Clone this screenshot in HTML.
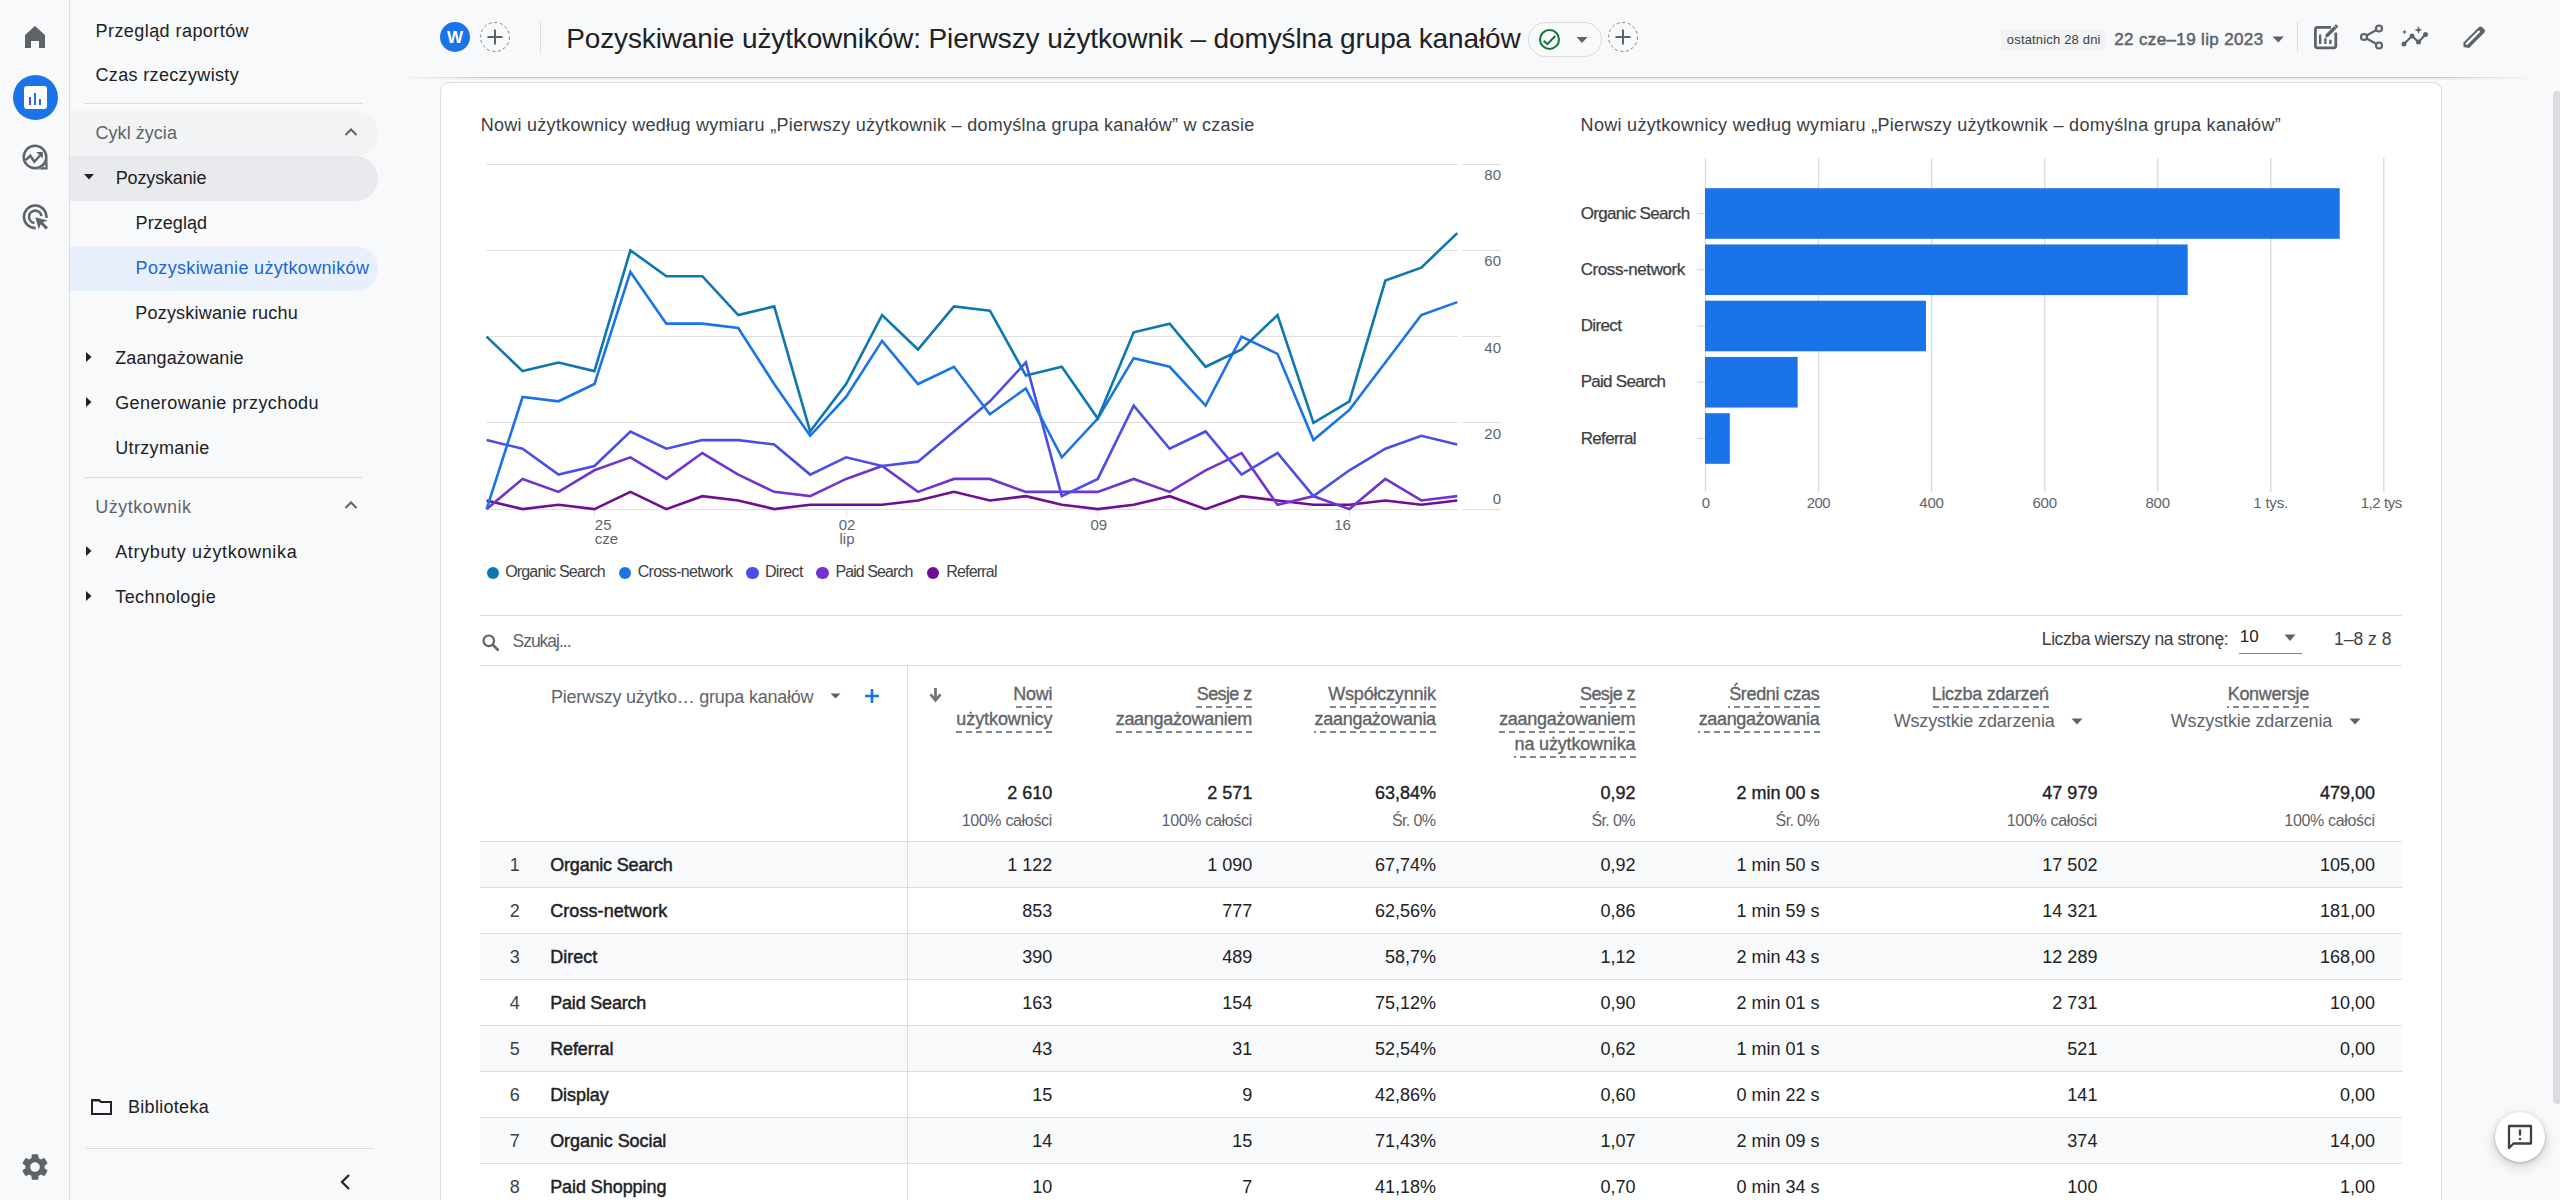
<!DOCTYPE html><html><head><meta charset="utf-8"><style>
*{box-sizing:border-box}
html,body{margin:0;padding:0;width:2560px;height:1200px;overflow:hidden;background:#f8f9fa;font-family:"Liberation Sans",sans-serif;}
.t{position:absolute;white-space:nowrap}
.a{position:absolute}
</style></head><body>
<div class="a" style="left:69px;top:0;width:1px;height:1200px;background:#dadce0"></div>
<svg class="a" style="left:23px;top:24px" width="24" height="26" viewBox="0 0 24 26"><path d="M2 11 L12 2 L22 11 V24 H16 V17 H8 V24 H2 Z" fill="#5f6368"/></svg>
<div class="a" style="left:13px;top:75px;width:45px;height:45px;border-radius:50%;background:#1a73e8"></div>
<div class="a" style="left:24px;top:86px;width:23px;height:23px;border-radius:3px;background:#fff"></div>
<div class="a" style="left:29px;top:97px;width:2px;height:8px;background:#4c4ce8"></div>
<div class="a" style="left:34px;top:93px;width:2px;height:12px;background:#1a73e8"></div>
<div class="a" style="left:39px;top:99px;width:2px;height:6px;background:#1a73e8"></div>
<svg class="a" style="left:22px;top:144px" width="27" height="27" viewBox="0 0 27 27"><path d="M13 25.6 H25.6 V13 A12.6 12.6 0 0 1 13 25.6 Z" fill="#5f6368"/><circle cx="22.6" cy="22.6" r="1" fill="#f8f9fa"/><circle cx="13" cy="13" r="11.3" fill="none" stroke="#5f6368" stroke-width="2.5"/><path d="M3.6 16.2 L8.3 11.6 L12.3 17.8 L18 11.5" fill="none" stroke="#5f6368" stroke-width="2.5"/><path d="M14.3 8.1 H20.8 V14.4 Z" fill="#5f6368"/></svg>
<svg class="a" style="left:22px;top:204px" width="28" height="28" viewBox="0 0 28 28"><path d="M24.5 13.8 A11.3 11.3 0 1 0 13.6 24.1" fill="none" stroke="#5f6368" stroke-width="2.6"/><path d="M19.4 12 A6.2 6.2 0 1 0 12.6 19" fill="none" stroke="#5f6368" stroke-width="2.6"/><path d="M13.3 13.3 L16.8 25.2 L18.8 20.2 L23.8 25.6 L26 23.4 L20.9 18.2 L25.8 16.4 Z" fill="#5f6368"/></svg>
<svg class="a" style="left:19px;top:1151px" width="32" height="32" viewBox="0 0 24 24"><path fill="#5f6368" d="M19.14 12.94c.04-.3.06-.61.06-.94 0-.32-.02-.64-.07-.94l2.03-1.58a.49.49 0 0 0 .12-.61l-1.92-3.32a.49.49 0 0 0-.59-.22l-2.39.96c-.5-.38-1.03-.7-1.62-.94l-.36-2.54a.48.48 0 0 0-.48-.41h-3.84c-.24 0-.43.17-.47.41l-.36 2.54c-.59.24-1.13.57-1.62.94l-2.39-.96c-.22-.08-.47 0-.59.22L2.74 8.87c-.12.21-.08.47.12.61l2.03 1.58c-.05.3-.09.63-.09.94s.02.64.07.94l-2.03 1.58a.49.49 0 0 0-.12.61l1.92 3.32c.12.22.37.29.59.22l2.39-.96c.5.38 1.03.7 1.62.94l.36 2.54c.05.24.24.41.48.41h3.84c.24 0 .44-.17.47-.41l.36-2.54c.59-.24 1.13-.56 1.62-.94l2.39.96c.22.08.47 0 .59-.22l1.92-3.32c.12-.22.07-.47-.12-.61l-2.01-1.58zM12 15.6c-1.98 0-3.6-1.62-3.6-3.6s1.62-3.6 3.6-3.6 3.6 1.62 3.6 3.6-1.62 3.6-3.6 3.6z"/></svg>
<div class="t" style="top:21.75px;font-size:18px;line-height:18px;color:#202124;letter-spacing:0.440px;left:95.50px;">Przegląd raportów</div>
<div class="t" style="top:66.25px;font-size:18px;line-height:18px;color:#202124;letter-spacing:0.343px;left:95.50px;">Czas rzeczywisty</div>
<div class="a" style="left:85px;top:102.5px;width:277px;height:1px;background:#dadce0"></div>
<div class="a" style="left:70px;top:111px;width:308px;height:45px;border-radius:0 23px 23px 0;background:#f1f3f4"></div>
<div class="t" style="top:123.75px;font-size:18px;line-height:18px;color:#5f6368;letter-spacing:0.046px;left:95.50px;">Cykl życia</div>
<svg class="a" style="left:344px;top:127px" width="14" height="10" viewBox="0 0 14 10"><path d="M1.5 8 L7 2.5 L12.5 8" fill="none" stroke="#5f6368" stroke-width="2"/></svg>
<div class="a" style="left:70px;top:156px;width:308px;height:45px;border-radius:0 23px 23px 0;background:#e8eaed"></div>
<svg class="a" style="left:84px;top:174px" width="10" height="6" viewBox="0 0 10 6"><path d="M0 0 H10 L5 5.5 Z" fill="#202124"/></svg>
<div class="t" style="top:168.75px;font-size:18px;line-height:18px;color:#202124;letter-spacing:-0.141px;left:115.70px;">Pozyskanie</div>
<div class="t" style="top:213.95px;font-size:18px;line-height:18px;color:#202124;letter-spacing:0.056px;left:135.60px;">Przegląd</div>
<div class="a" style="left:70px;top:246px;width:308px;height:45px;border-radius:0 23px 23px 0;background:#e8f0fe"></div>
<div class="t" style="top:258.75px;font-size:18px;line-height:18px;color:#1967d2;letter-spacing:0.342px;left:135.60px;">Pozyskiwanie użytkowników</div>
<div class="t" style="top:304.05px;font-size:18px;line-height:18px;color:#202124;letter-spacing:0.199px;left:135.30px;">Pozyskiwanie ruchu</div>
<svg class="a" style="left:86px;top:351.8px" width="6" height="10" viewBox="0 0 6 10"><path d="M0 0 L5.5 5 L0 10 Z" fill="#202124"/></svg>
<div class="t" style="top:349.05px;font-size:18px;line-height:18px;color:#202124;letter-spacing:0.102px;left:115.20px;">Zaangażowanie</div>
<svg class="a" style="left:86px;top:396.8px" width="6" height="10" viewBox="0 0 6 10"><path d="M0 0 L5.5 5 L0 10 Z" fill="#202124"/></svg>
<div class="t" style="top:394.05px;font-size:18px;line-height:18px;color:#202124;letter-spacing:0.409px;left:115.20px;">Generowanie przychodu</div>
<div class="t" style="top:439.05px;font-size:18px;line-height:18px;color:#202124;letter-spacing:0.346px;left:115.20px;">Utrzymanie</div>
<div class="a" style="left:85px;top:477px;width:277px;height:1px;background:#dadce0"></div>
<div class="t" style="top:498.05px;font-size:18px;line-height:18px;color:#5f6368;letter-spacing:0.513px;left:95.30px;">Użytkownik</div>
<svg class="a" style="left:344px;top:500px" width="14" height="10" viewBox="0 0 14 10"><path d="M1.5 8 L7 2.5 L12.5 8" fill="none" stroke="#5f6368" stroke-width="2"/></svg>
<svg class="a" style="left:86px;top:545.8px" width="6" height="10" viewBox="0 0 6 10"><path d="M0 0 L5.5 5 L0 10 Z" fill="#202124"/></svg>
<div class="t" style="top:543.05px;font-size:18px;line-height:18px;color:#202124;letter-spacing:0.652px;left:115.20px;">Atrybuty użytkownika</div>
<svg class="a" style="left:86px;top:590.8px" width="6" height="10" viewBox="0 0 6 10"><path d="M0 0 L5.5 5 L0 10 Z" fill="#202124"/></svg>
<div class="t" style="top:588.05px;font-size:18px;line-height:18px;color:#202124;letter-spacing:0.448px;left:115.20px;">Technologie</div>
<svg class="a" style="left:91px;top:1098px" width="21" height="17" viewBox="0 0 21 17"><path d="M1 2 H8 L10 4 H20 V16 H1 Z" fill="none" stroke="#202124" stroke-width="2"/><path d="M1 1.5 H8 L10 3.5 H1Z" fill="#202124"/></svg>
<div class="t" style="top:1097.85px;font-size:18px;line-height:18px;color:#202124;letter-spacing:0.298px;left:128.00px;">Biblioteka</div>
<div class="a" style="left:86px;top:1148px;width:288px;height:1px;background:#dadce0"></div>
<svg class="a" style="left:338px;top:1173px" width="14" height="18" viewBox="0 0 14 18"><path d="M11 2 L4 9 L11 16" fill="none" stroke="#202124" stroke-width="2.2"/></svg>
<div class="a" style="left:440px;top:22px;width:30px;height:30px;border-radius:50%;background:#1a73e8"></div>
<div class="t" style="top:29.10px;font-size:17px;line-height:17px;color:#fff;font-weight:700;left:446.97px;">W</div>
<svg class="a" style="left:479px;top:21px" width="32" height="32" viewBox="0 0 32 32"><circle cx="16" cy="16" r="14.5" fill="none" stroke="#80868b" stroke-width="1" stroke-dasharray="3 2.6"/><path d="M8.5 16 H23.5 M16 8.5 V23.5" stroke="#5f6368" stroke-width="2"/></svg>
<div class="a" style="left:540px;top:22px;width:1px;height:30px;background:#dadce0"></div>
<div class="t" style="top:25.03px;font-size:28px;line-height:28px;color:#202124;letter-spacing:-0.126px;left:566.20px;">Pozyskiwanie użytkowników: Pierwszy użytkownik – domyślna grupa kanałów</div>
<div class="a" style="left:1528px;top:22px;width:74px;height:35px;border-radius:18px;border:1px solid #dadce0"></div>
<svg class="a" style="left:1538px;top:28px" width="23" height="23" viewBox="0 0 23 23"><circle cx="11.5" cy="11.4" r="9.5" fill="none" stroke="#137333" stroke-width="2"/><path d="M5.7 12.7 L9.4 16.2 L17.2 8" fill="none" stroke="#137333" stroke-width="2"/></svg>
<svg class="a" style="left:1576px;top:36px" width="12" height="8" viewBox="0 0 12 8"><path d="M0.5 1 H11.5 L6 7 Z" fill="#5f6368"/></svg>
<svg class="a" style="left:1607px;top:21px" width="32" height="32" viewBox="0 0 32 32"><circle cx="16" cy="16" r="14.5" fill="none" stroke="#80868b" stroke-width="1" stroke-dasharray="3 2.6"/><path d="M8.5 16 H23.5 M16 8.5 V23.5" stroke="#5f6368" stroke-width="2"/></svg>
<div class="a" style="left:2001px;top:30px;width:105px;height:20px;background:#f1f3f4"></div>
<div class="t" style="top:32.89px;font-size:13px;line-height:13px;color:#3c4043;letter-spacing:0.176px;left:2006.80px;">ostatnich 28 dni</div>
<div class="t" style="top:31.00px;font-size:17px;line-height:17px;color:#5f6368;-webkit-text-stroke:0.5px #5f6368;letter-spacing:0.358px;left:2114.30px;">22 cze–19 lip 2023</div>
<svg class="a" style="left:2272px;top:36px" width="13" height="7" viewBox="0 0 13 7"><path d="M0.5 0.5 H12 L6.25 6.5 Z" fill="#5f6368"/></svg>
<div class="a" style="left:2297px;top:22px;width:1px;height:30px;background:#dadce0"></div>
<svg class="a" style="left:2312px;top:24px" width="28" height="27" viewBox="0 0 28 27"><path d="M19 3.4 H5.4 Q3.4 3.4 3.4 5.4 V21.8 Q3.4 23.8 5.4 23.8 H21.8 Q23.8 23.8 23.8 21.8 V8.5" fill="none" stroke="#5f6368" stroke-width="2.8"/><path d="M8.15 10.5 V19.9 M13.4 14.2 V19.9 M18.4 15.8 V19.9" stroke="#5f6368" stroke-width="2.3"/><path d="M13.2 13.4 L13.6 10.6 L22.2 2 L24.6 4.4 L16 13 Z" fill="#5f6368"/><path d="M23.2 1 L25.6 3.4" stroke="#5f6368" stroke-width="2.2"/></svg>
<svg class="a" style="left:2359px;top:24px" width="26" height="26" viewBox="0 0 26 26"><circle cx="20" cy="4.5" r="3" fill="none" stroke="#5f6368" stroke-width="2.2"/><circle cx="5" cy="13" r="3" fill="none" stroke="#5f6368" stroke-width="2.2"/><circle cx="20" cy="21.5" r="3" fill="none" stroke="#5f6368" stroke-width="2.2"/><path d="M7.6 11.5 L17.4 6 M7.6 14.5 L17.4 20" stroke="#5f6368" stroke-width="2.2"/></svg>
<svg class="a" style="left:2401px;top:25px" width="30" height="23" viewBox="0 0 30 23"><path d="M3 19 L11 11 L17.5 17 L24.5 9.5" fill="none" stroke="#5f6368" stroke-width="2.2"/><circle cx="3" cy="19" r="2.5" fill="#5f6368"/><circle cx="11" cy="11" r="2.5" fill="#5f6368"/><circle cx="17.5" cy="17" r="2.5" fill="#5f6368"/><circle cx="24.5" cy="9.5" r="2.5" fill="#5f6368"/><path d="M17.5 1 L18.6 3.9 L21.5 5 L18.6 6.1 L17.5 9 L16.4 6.1 L13.5 5 L16.4 3.9Z" fill="#5f6368"/><path d="M3.5 4.5 L4.2 6.3 L6 7 L4.2 7.7 L3.5 9.5 L2.8 7.7 L1 7 L2.8 6.3Z" fill="#5f6368"/></svg>
<svg class="a" style="left:2461px;top:25px" width="26" height="24" viewBox="0 0 26 24"><path d="M2.5 22 V17.5 L18 2 Q19.5 0.8 21 2 L23.5 4.5 Q24.7 6 23.5 7.5 L8 23 Z" fill="#5f6368"/><path d="M5 19.5 L18.5 6" stroke="#fff" stroke-width="2.3"/></svg>
<div class="a" style="left:400px;top:77px;width:2135px;height:1px;background:linear-gradient(90deg,rgba(60,64,67,0) 0,rgba(60,64,67,.28) 90px,rgba(60,64,67,.28) 2040px,rgba(60,64,67,0) 100%)"></div>
<div class="a" style="left:400px;top:78px;width:2135px;height:2px;background:linear-gradient(90deg,rgba(60,64,67,0) 0,rgba(60,64,67,.06) 90px,rgba(60,64,67,.06) 2040px,rgba(60,64,67,0) 100%)"></div>
<div class="a" style="left:440px;top:82px;width:2002px;height:1140px;border-radius:9px;border:1px solid #dadce0;background:#fff"></div>
<div class="t" style="top:115.55px;font-size:18px;line-height:18px;color:#3c4043;letter-spacing:0.258px;left:480.80px;">Nowi użytkownicy według wymiaru „Pierwszy użytkownik – domyślna grupa kanałów” w czasie</div>
<div class="t" style="top:116.25px;font-size:18px;line-height:18px;color:#3c4043;letter-spacing:0.297px;left:1580.60px;">Nowi użytkownicy według wymiaru „Pierwszy użytkownik – domyślna grupa kanałów”</div>
<svg class="a" style="left:0;top:0" width="2560" height="620" viewBox="0 0 2560 620"><path d="M486 509.50 H1458 M1463 509.50 H1501" stroke="#e0e0e0" stroke-width="1"/><path d="M486 422.50 H1458 M1463 422.50 H1501" stroke="#e0e0e0" stroke-width="1"/><path d="M486 336.50 H1458 M1463 336.50 H1501" stroke="#e0e0e0" stroke-width="1"/><path d="M486 250.50 H1458 M1463 250.50 H1501" stroke="#e0e0e0" stroke-width="1"/><path d="M486 164.50 H1458 M1463 164.50 H1501" stroke="#e0e0e0" stroke-width="1"/><path d="M594.5 509 V516" stroke="#e0e0e0" stroke-width="1"/><path d="M846.5 509 V516" stroke="#e0e0e0" stroke-width="1"/><path d="M1097.5 509 V516" stroke="#e0e0e0" stroke-width="1"/><path d="M1349.5 509 V516" stroke="#e0e0e0" stroke-width="1"/><polyline points="486.60,500.48 522.55,509.10 558.50,504.79 594.45,509.10 630.40,491.85 666.35,509.10 702.30,496.16 738.25,500.48 774.20,509.10 810.15,504.79 846.10,504.79 882.05,504.79 918.00,500.48 953.95,491.85 989.90,500.48 1025.85,496.16 1061.80,504.79 1097.75,509.10 1133.70,504.79 1169.65,496.16 1205.60,509.10 1241.55,496.16 1277.50,500.48 1313.45,504.79 1349.40,504.79 1385.35,500.48 1421.30,504.79 1457.25,500.48" fill="none" stroke="#6f0d93" stroke-width="2.6" stroke-linejoin="miter" stroke-miterlimit="10"/><polyline points="486.60,509.10 522.55,478.91 558.50,491.85 594.45,470.29 630.40,457.35 666.35,478.91 702.30,453.04 738.25,474.60 774.20,491.85 810.15,496.16 846.10,478.91 882.05,465.98 918.00,491.85 953.95,478.91 989.90,478.91 1025.85,491.85 1061.80,491.85 1097.75,491.85 1133.70,478.91 1169.65,491.85 1205.60,470.29 1241.55,453.04 1277.50,504.79 1313.45,496.16 1349.40,509.10 1385.35,478.91 1421.30,500.48 1457.25,496.16" fill="none" stroke="#7234d1" stroke-width="2.6" stroke-linejoin="miter" stroke-miterlimit="10"/><polyline points="486.60,440.10 522.55,448.73 558.50,474.60 594.45,465.98 630.40,431.48 666.35,448.73 702.30,440.10 738.25,440.10 774.20,444.41 810.15,474.60 846.10,457.35 882.05,465.98 918.00,461.66 953.95,431.48 989.90,401.29 1025.85,362.48 1061.80,496.16 1097.75,478.91 1133.70,405.60 1169.65,448.73 1205.60,431.48 1241.55,474.60 1277.50,453.04 1313.45,496.16 1349.40,470.29 1385.35,448.73 1421.30,435.79 1457.25,444.41" fill="none" stroke="#4b4de9" stroke-width="2.6" stroke-linejoin="miter" stroke-miterlimit="10"/><polyline points="486.60,509.10 522.55,396.98 558.50,401.29 594.45,384.04 630.40,271.91 666.35,323.66 702.30,323.66 738.25,327.98 774.20,384.04 810.15,435.79 846.10,396.98 882.05,340.91 918.00,384.04 953.95,366.79 989.90,414.23 1025.85,388.35 1061.80,457.35 1097.75,418.54 1133.70,358.16 1169.65,366.79 1205.60,405.60 1241.55,336.60 1277.50,353.85 1313.45,440.10 1349.40,409.91 1385.35,362.48 1421.30,315.04 1457.25,302.10" fill="none" stroke="#1a73e8" stroke-width="2.6" stroke-linejoin="miter" stroke-miterlimit="10"/><polyline points="486.60,336.60 522.55,371.10 558.50,362.48 594.45,371.10 630.40,250.35 666.35,276.23 702.30,276.23 738.25,315.04 774.20,306.41 810.15,431.48 846.10,384.04 882.05,315.04 918.00,349.54 953.95,306.41 989.90,310.73 1025.85,375.41 1061.80,366.79 1097.75,418.54 1133.70,332.29 1169.65,323.66 1205.60,366.79 1241.55,349.54 1277.50,315.04 1313.45,422.85 1349.40,401.29 1385.35,280.54 1421.30,267.60 1457.25,233.10" fill="none" stroke="#0c77b0" stroke-width="2.6" stroke-linejoin="miter" stroke-miterlimit="10"/><path d="M1705.50 158 V492" stroke="#dadce0" stroke-width="1.4"/><path d="M1818.55 158 V492" stroke="#dadce0" stroke-width="1.4"/><path d="M1931.60 158 V492" stroke="#dadce0" stroke-width="1.4"/><path d="M2044.65 158 V492" stroke="#dadce0" stroke-width="1.4"/><path d="M2157.70 158 V492" stroke="#dadce0" stroke-width="1.4"/><path d="M2270.75 158 V492" stroke="#dadce0" stroke-width="1.4"/><path d="M2383.80 158 V492" stroke="#dadce0" stroke-width="1.4"/><rect x="1705.00" y="188.20" width="634.71" height="50.6" fill="#1a73e8"/><path d="M1697 213.50 H1705" stroke="#dadce0" stroke-width="1.4"/><rect x="1705.00" y="244.45" width="482.66" height="50.6" fill="#1a73e8"/><path d="M1697 269.75 H1705" stroke="#dadce0" stroke-width="1.4"/><rect x="1705.00" y="300.70" width="220.95" height="50.6" fill="#1a73e8"/><path d="M1697 326.00 H1705" stroke="#dadce0" stroke-width="1.4"/><rect x="1705.00" y="356.95" width="92.64" height="50.6" fill="#1a73e8"/><path d="M1697 382.25 H1705" stroke="#dadce0" stroke-width="1.4"/><rect x="1705.00" y="413.20" width="24.81" height="50.6" fill="#1a73e8"/><path d="M1697 438.50 H1705" stroke="#dadce0" stroke-width="1.4"/></svg>
<div class="t" style="top:491.20px;font-size:15px;line-height:15px;color:#5f6368;right:1059.00px;text-align:right;">0</div>
<div class="t" style="top:425.75px;font-size:15px;line-height:15px;color:#5f6368;right:1059.00px;text-align:right;">20</div>
<div class="t" style="top:339.50px;font-size:15px;line-height:15px;color:#5f6368;right:1059.00px;text-align:right;">40</div>
<div class="t" style="top:253.25px;font-size:15px;line-height:15px;color:#5f6368;right:1059.00px;text-align:right;">60</div>
<div class="t" style="top:167.00px;font-size:15px;line-height:15px;color:#5f6368;right:1059.00px;text-align:right;">80</div>
<div class="t" style="top:516.69px;font-size:15px;line-height:15px;color:#5f6368;left:594.80px;">25</div>
<div class="t" style="top:531.29px;font-size:15px;line-height:15px;color:#5f6368;left:594.80px;">cze</div>
<div class="t" style="top:516.69px;font-size:15px;line-height:15px;color:#5f6368;left:838.67px;">02</div>
<div class="t" style="top:531.29px;font-size:15px;line-height:15px;color:#5f6368;left:839.50px;">lip</div>
<div class="t" style="top:516.69px;font-size:15px;line-height:15px;color:#5f6368;left:1090.47px;">09</div>
<div class="t" style="top:516.69px;font-size:15px;line-height:15px;color:#5f6368;right:1209.20px;text-align:right;">16</div>
<div class="a" style="left:486.60px;top:566.70px;width:12.4px;height:12.4px;border-radius:50%;background:#0c77b0"></div>
<div class="t" style="top:564.45px;font-size:16px;line-height:16px;color:#3c4043;letter-spacing:-0.831px;left:505.20px;">Organic Search</div>
<div class="a" style="left:618.70px;top:566.70px;width:12.4px;height:12.4px;border-radius:50%;background:#1a73e8"></div>
<div class="t" style="top:564.45px;font-size:16px;line-height:16px;color:#3c4043;letter-spacing:-0.658px;left:637.70px;">Cross-network</div>
<div class="a" style="left:746.20px;top:566.70px;width:12.4px;height:12.4px;border-radius:50%;background:#4b4de9"></div>
<div class="t" style="top:564.45px;font-size:16px;line-height:16px;color:#3c4043;letter-spacing:-0.692px;left:765.00px;">Direct</div>
<div class="a" style="left:816.20px;top:566.70px;width:12.4px;height:12.4px;border-radius:50%;background:#7234d1"></div>
<div class="t" style="top:564.45px;font-size:16px;line-height:16px;color:#3c4043;letter-spacing:-0.910px;left:835.40px;">Paid Search</div>
<div class="a" style="left:927.10px;top:566.70px;width:12.4px;height:12.4px;border-radius:50%;background:#6f0d93"></div>
<div class="t" style="top:564.45px;font-size:16px;line-height:16px;color:#3c4043;letter-spacing:-0.797px;left:946.20px;">Referral</div>
<div class="t" style="top:204.60px;font-size:17px;line-height:17px;color:#3c4043;-webkit-text-stroke:0.25px #3c4043;letter-spacing:-0.665px;left:1580.70px;">Organic Search</div>
<div class="t" style="top:260.85px;font-size:17px;line-height:17px;color:#3c4043;-webkit-text-stroke:0.25px #3c4043;letter-spacing:-0.413px;left:1580.70px;">Cross-network</div>
<div class="t" style="top:317.10px;font-size:17px;line-height:17px;color:#3c4043;-webkit-text-stroke:0.25px #3c4043;letter-spacing:-0.634px;left:1580.70px;">Direct</div>
<div class="t" style="top:373.35px;font-size:17px;line-height:17px;color:#3c4043;-webkit-text-stroke:0.25px #3c4043;letter-spacing:-0.725px;left:1580.70px;">Paid Search</div>
<div class="t" style="top:429.60px;font-size:17px;line-height:17px;color:#3c4043;-webkit-text-stroke:0.25px #3c4043;letter-spacing:-0.662px;left:1580.70px;">Referral</div>
<div class="t" style="top:495.40px;font-size:15px;line-height:15px;color:#5f6368;left:1701.80px;">0</div>
<div class="t" style="top:495.40px;font-size:15px;line-height:15px;color:#5f6368;letter-spacing:-0.575px;left:1806.70px;">200</div>
<div class="t" style="top:495.40px;font-size:15px;line-height:15px;color:#5f6368;letter-spacing:-0.125px;left:1919.20px;">400</div>
<div class="t" style="top:495.40px;font-size:15px;line-height:15px;color:#5f6368;letter-spacing:-0.275px;left:2032.50px;">600</div>
<div class="t" style="top:495.40px;font-size:15px;line-height:15px;color:#5f6368;letter-spacing:-0.325px;left:2145.60px;">800</div>
<div class="t" style="top:495.40px;font-size:15px;line-height:15px;color:#5f6368;letter-spacing:-0.210px;left:2253.30px;">1 tys.</div>
<div class="t" style="top:495.40px;font-size:15px;line-height:15px;color:#5f6368;letter-spacing:-0.429px;left:2360.70px;">1,2 tys</div>
<div class="a" style="left:480px;top:615px;width:1922px;height:1px;background:#dadce0"></div>
<div class="a" style="left:480px;top:665px;width:1922px;height:1px;background:#dadce0"></div>
<svg class="a" style="left:481px;top:633px" width="20" height="20" viewBox="0 0 20 20"><circle cx="7.8" cy="7.8" r="5.3" fill="none" stroke="#5f6368" stroke-width="2.2"/><path d="M11.6 11.6 L17.5 17.5" stroke="#5f6368" stroke-width="2.6"/></svg>
<div class="t" style="top:632.68px;font-size:17.5px;line-height:17.5px;color:#5f6368;letter-spacing:-1.014px;left:512.50px;">Szukaj...</div>
<div class="t" style="top:631.18px;font-size:17.5px;line-height:17.5px;color:#3c4043;letter-spacing:-0.402px;left:2041.80px;">Liczba wierszy na stronę:</div>
<div class="t" style="top:627.70px;font-size:17px;line-height:17px;color:#202124;left:2239.80px;">10</div>
<div class="a" style="left:2239px;top:653px;width:63px;height:1px;background:#80868b"></div>
<svg class="a" style="left:2284px;top:634px" width="12" height="8" viewBox="0 0 12 8"><path d="M0.5 0.5 H11.5 L6 7 Z" fill="#5f6368"/></svg>
<div class="t" style="top:631.18px;font-size:17.5px;line-height:17.5px;color:#3c4043;right:168.60px;text-align:right;">1–8 z 8</div>
<div class="a" style="left:480px;top:841px;width:1922px;height:47px;background:#f8f9fa;border-top:1px solid #dadce0"></div>
<div class="a" style="left:480px;top:887px;width:1922px;height:47px;background:#fff;border-top:1px solid #dadce0"></div>
<div class="a" style="left:480px;top:933px;width:1922px;height:47px;background:#f8f9fa;border-top:1px solid #dadce0"></div>
<div class="a" style="left:480px;top:979px;width:1922px;height:47px;background:#fff;border-top:1px solid #dadce0"></div>
<div class="a" style="left:480px;top:1025px;width:1922px;height:47px;background:#f8f9fa;border-top:1px solid #dadce0"></div>
<div class="a" style="left:480px;top:1071px;width:1922px;height:47px;background:#fff;border-top:1px solid #dadce0"></div>
<div class="a" style="left:480px;top:1117px;width:1922px;height:47px;background:#f8f9fa;border-top:1px solid #dadce0"></div>
<div class="a" style="left:480px;top:1163px;width:1922px;height:47px;background:#fff;border-top:1px solid #dadce0"></div>
<div class="a" style="left:907px;top:666px;width:1px;height:540px;background:#dadce0"></div>
<div class="t" style="top:687.75px;font-size:18px;line-height:18px;color:#5f6368;letter-spacing:-0.224px;left:551.00px;">Pierwszy użytko… grupa kanałów</div>
<svg class="a" style="left:830px;top:693px" width="11" height="6" viewBox="0 0 11 6"><path d="M0.5 0.5 H10.5 L5.5 5.5 Z" fill="#5f6368"/></svg>
<svg class="a" style="left:864px;top:688px" width="16" height="16" viewBox="0 0 16 16"><path d="M1 8 H15 M8 1 V15" stroke="#1a73e8" stroke-width="2.6"/></svg>
<svg class="a" style="left:929px;top:687px" width="13" height="17" viewBox="0 0 13 17"><path d="M6.5 1 V12" stroke="#70757a" stroke-width="2.8"/><path d="M0.5 8.2 L6.5 15.5 L12.5 8.2 L10.6 6.4 L6.5 11 L2.4 6.4 Z" fill="#70757a"/></svg>
<div class="t" style="top:684.95px;font-size:18px;line-height:18px;color:#5f6368;-webkit-text-stroke:0.35px #5f6368;letter-spacing:-0.283px;right:1507.78px;text-align:right;">Nowi</div>
<div class="a" style="left:1012.3px;top:706.4px;width:40.2px;height:2px;background:repeating-linear-gradient(to left,#80868b 0 6px,transparent 6px 10px)"></div>
<div class="t" style="top:709.75px;font-size:18px;line-height:18px;color:#5f6368;-webkit-text-stroke:0.35px #5f6368;letter-spacing:-0.082px;right:1507.58px;text-align:right;">użytkownicy</div>
<div class="a" style="left:955.3px;top:731.3px;width:97.2px;height:2px;background:repeating-linear-gradient(to left,#80868b 0 6px,transparent 6px 10px)"></div>
<div class="t" style="top:684.95px;font-size:18px;line-height:18px;color:#5f6368;-webkit-text-stroke:0.35px #5f6368;letter-spacing:-0.590px;right:1308.39px;text-align:right;">Sesje z</div>
<div class="a" style="left:1195.7px;top:706.4px;width:56.5px;height:2px;background:repeating-linear-gradient(to left,#80868b 0 6px,transparent 6px 10px)"></div>
<div class="t" style="top:709.75px;font-size:18px;line-height:18px;color:#5f6368;-webkit-text-stroke:0.35px #5f6368;letter-spacing:-0.272px;right:1308.07px;text-align:right;">zaangażowaniem</div>
<div class="a" style="left:1114.6px;top:731.3px;width:137.6px;height:2px;background:repeating-linear-gradient(to left,#80868b 0 6px,transparent 6px 10px)"></div>
<div class="t" style="top:684.95px;font-size:18px;line-height:18px;color:#5f6368;-webkit-text-stroke:0.35px #5f6368;letter-spacing:-0.196px;right:1124.10px;text-align:right;">Współczynnik</div>
<div class="a" style="left:1327.1px;top:706.4px;width:109.0px;height:2px;background:repeating-linear-gradient(to left,#80868b 0 6px,transparent 6px 10px)"></div>
<div class="t" style="top:709.75px;font-size:18px;line-height:18px;color:#5f6368;-webkit-text-stroke:0.35px #5f6368;letter-spacing:-0.299px;right:1124.20px;text-align:right;">zaangażowania</div>
<div class="a" style="left:1313.5px;top:731.3px;width:122.6px;height:2px;background:repeating-linear-gradient(to left,#80868b 0 6px,transparent 6px 10px)"></div>
<div class="t" style="top:684.95px;font-size:18px;line-height:18px;color:#5f6368;-webkit-text-stroke:0.35px #5f6368;letter-spacing:-0.590px;right:925.09px;text-align:right;">Sesje z</div>
<div class="a" style="left:1579.0px;top:706.4px;width:56.5px;height:2px;background:repeating-linear-gradient(to left,#80868b 0 6px,transparent 6px 10px)"></div>
<div class="t" style="top:709.75px;font-size:18px;line-height:18px;color:#5f6368;-webkit-text-stroke:0.35px #5f6368;letter-spacing:-0.287px;right:924.79px;text-align:right;">zaangażowaniem</div>
<div class="a" style="left:1498.1px;top:731.3px;width:137.4px;height:2px;background:repeating-linear-gradient(to left,#80868b 0 6px,transparent 6px 10px)"></div>
<div class="t" style="top:734.95px;font-size:18px;line-height:18px;color:#5f6368;-webkit-text-stroke:0.35px #5f6368;letter-spacing:-0.163px;right:924.66px;text-align:right;">na użytkownika</div>
<div class="a" style="left:1513.5px;top:756.4px;width:122.0px;height:2px;background:repeating-linear-gradient(to left,#80868b 0 6px,transparent 6px 10px)"></div>
<div class="t" style="top:684.95px;font-size:18px;line-height:18px;color:#5f6368;-webkit-text-stroke:0.35px #5f6368;letter-spacing:-0.355px;right:740.65px;text-align:right;">Średni czas</div>
<div class="a" style="left:1728.2px;top:706.4px;width:91.5px;height:2px;background:repeating-linear-gradient(to left,#80868b 0 6px,transparent 6px 10px)"></div>
<div class="t" style="top:709.75px;font-size:18px;line-height:18px;color:#5f6368;-webkit-text-stroke:0.35px #5f6368;letter-spacing:-0.341px;right:740.64px;text-align:right;">zaangażowania</div>
<div class="a" style="left:1697.6px;top:731.3px;width:122.1px;height:2px;background:repeating-linear-gradient(to left,#80868b 0 6px,transparent 6px 10px)"></div>
<div class="t" style="top:684.95px;font-size:18px;line-height:18px;color:#5f6368;-webkit-text-stroke:0.35px #5f6368;letter-spacing:-0.288px;right:511.29px;text-align:right;">Liczba zdarzeń</div>
<div class="a" style="left:1930.7px;top:706.4px;width:118.3px;height:2px;background:repeating-linear-gradient(to left,#80868b 0 6px,transparent 6px 10px)"></div>
<div class="t" style="top:684.95px;font-size:18px;line-height:18px;color:#5f6368;-webkit-text-stroke:0.35px #5f6368;letter-spacing:-0.307px;right:251.01px;text-align:right;">Konwersje</div>
<div class="a" style="left:2226.7px;top:706.4px;width:82.6px;height:2px;background:repeating-linear-gradient(to left,#80868b 0 6px,transparent 6px 10px)"></div>
<div class="t" style="top:712.45px;font-size:18px;line-height:18px;color:#5f6368;letter-spacing:-0.164px;left:1893.70px;">Wszystkie zdarzenia</div>
<svg class="a" style="left:2071px;top:718px" width="12" height="7" viewBox="0 0 12 7"><path d="M0.5 0.5 H11.5 L6 6.5 Z" fill="#5f6368"/></svg>
<div class="t" style="top:712.45px;font-size:18px;line-height:18px;color:#5f6368;letter-spacing:-0.131px;left:2170.70px;">Wszystkie zdarzenia</div>
<svg class="a" style="left:2349px;top:718px" width="12" height="7" viewBox="0 0 12 7"><path d="M0.5 0.5 H11.5 L6 6.5 Z" fill="#5f6368"/></svg>
<div class="t" style="top:783.75px;font-size:18px;line-height:18px;color:#202124;-webkit-text-stroke:0.35px #202124;right:1507.70px;text-align:right;">2 610</div>
<div class="t" style="top:812.65px;font-size:16px;line-height:16px;color:#5f6368;letter-spacing:-0.331px;right:1508.03px;text-align:right;">100% całości</div>
<div class="t" style="top:783.75px;font-size:18px;line-height:18px;color:#202124;-webkit-text-stroke:0.35px #202124;right:1307.80px;text-align:right;">2 571</div>
<div class="t" style="top:812.65px;font-size:16px;line-height:16px;color:#5f6368;letter-spacing:-0.331px;right:1308.13px;text-align:right;">100% całości</div>
<div class="t" style="top:783.75px;font-size:18px;line-height:18px;color:#202124;-webkit-text-stroke:0.35px #202124;right:1124.00px;text-align:right;">63,84%</div>
<div class="t" style="top:812.65px;font-size:16px;line-height:16px;color:#5f6368;letter-spacing:-0.624px;right:1124.62px;text-align:right;">Śr. 0%</div>
<div class="t" style="top:783.75px;font-size:18px;line-height:18px;color:#202124;-webkit-text-stroke:0.35px #202124;right:924.50px;text-align:right;">0,92</div>
<div class="t" style="top:812.65px;font-size:16px;line-height:16px;color:#5f6368;letter-spacing:-0.624px;right:925.12px;text-align:right;">Śr. 0%</div>
<div class="t" style="top:783.75px;font-size:18px;line-height:18px;color:#202124;-webkit-text-stroke:0.35px #202124;right:740.40px;text-align:right;">2 min 00 s</div>
<div class="t" style="top:812.65px;font-size:16px;line-height:16px;color:#5f6368;letter-spacing:-0.624px;right:741.02px;text-align:right;">Śr. 0%</div>
<div class="t" style="top:783.75px;font-size:18px;line-height:18px;color:#202124;-webkit-text-stroke:0.35px #202124;right:462.60px;text-align:right;">47 979</div>
<div class="t" style="top:812.65px;font-size:16px;line-height:16px;color:#5f6368;letter-spacing:-0.331px;right:462.93px;text-align:right;">100% całości</div>
<div class="t" style="top:783.75px;font-size:18px;line-height:18px;color:#202124;-webkit-text-stroke:0.35px #202124;right:185.00px;text-align:right;">479,00</div>
<div class="t" style="top:812.65px;font-size:16px;line-height:16px;color:#5f6368;letter-spacing:-0.331px;right:185.33px;text-align:right;">100% całości</div>
<div class="t" style="top:855.75px;font-size:18px;line-height:18px;color:#3c4043;left:509.71px;">1</div>
<div class="t" style="top:855.75px;font-size:18px;line-height:18px;color:#202124;-webkit-text-stroke:0.45px #202124;letter-spacing:-0.185px;left:550.20px;">Organic Search</div>
<div class="t" style="top:855.75px;font-size:18px;line-height:18px;color:#202124;right:1507.70px;text-align:right;">1 122</div>
<div class="t" style="top:855.75px;font-size:18px;line-height:18px;color:#202124;right:1307.80px;text-align:right;">1 090</div>
<div class="t" style="top:855.75px;font-size:18px;line-height:18px;color:#202124;right:1124.00px;text-align:right;">67,74%</div>
<div class="t" style="top:855.75px;font-size:18px;line-height:18px;color:#202124;right:924.50px;text-align:right;">0,92</div>
<div class="t" style="top:855.75px;font-size:18px;line-height:18px;color:#202124;right:740.40px;text-align:right;">1 min 50 s</div>
<div class="t" style="top:855.75px;font-size:18px;line-height:18px;color:#202124;right:462.60px;text-align:right;">17 502</div>
<div class="t" style="top:855.75px;font-size:18px;line-height:18px;color:#202124;right:185.00px;text-align:right;">105,00</div>
<div class="t" style="top:901.75px;font-size:18px;line-height:18px;color:#3c4043;left:509.71px;">2</div>
<div class="t" style="top:901.75px;font-size:18px;line-height:18px;color:#202124;-webkit-text-stroke:0.45px #202124;letter-spacing:0.083px;left:550.20px;">Cross-network</div>
<div class="t" style="top:901.75px;font-size:18px;line-height:18px;color:#202124;right:1507.70px;text-align:right;">853</div>
<div class="t" style="top:901.75px;font-size:18px;line-height:18px;color:#202124;right:1307.80px;text-align:right;">777</div>
<div class="t" style="top:901.75px;font-size:18px;line-height:18px;color:#202124;right:1124.00px;text-align:right;">62,56%</div>
<div class="t" style="top:901.75px;font-size:18px;line-height:18px;color:#202124;right:924.50px;text-align:right;">0,86</div>
<div class="t" style="top:901.75px;font-size:18px;line-height:18px;color:#202124;right:740.40px;text-align:right;">1 min 59 s</div>
<div class="t" style="top:901.75px;font-size:18px;line-height:18px;color:#202124;right:462.60px;text-align:right;">14 321</div>
<div class="t" style="top:901.75px;font-size:18px;line-height:18px;color:#202124;right:185.00px;text-align:right;">181,00</div>
<div class="t" style="top:947.75px;font-size:18px;line-height:18px;color:#3c4043;left:509.71px;">3</div>
<div class="t" style="top:947.75px;font-size:18px;line-height:18px;color:#202124;-webkit-text-stroke:0.45px #202124;letter-spacing:0.024px;left:550.20px;">Direct</div>
<div class="t" style="top:947.75px;font-size:18px;line-height:18px;color:#202124;right:1507.70px;text-align:right;">390</div>
<div class="t" style="top:947.75px;font-size:18px;line-height:18px;color:#202124;right:1307.80px;text-align:right;">489</div>
<div class="t" style="top:947.75px;font-size:18px;line-height:18px;color:#202124;right:1124.00px;text-align:right;">58,7%</div>
<div class="t" style="top:947.75px;font-size:18px;line-height:18px;color:#202124;right:924.50px;text-align:right;">1,12</div>
<div class="t" style="top:947.75px;font-size:18px;line-height:18px;color:#202124;right:740.40px;text-align:right;">2 min 43 s</div>
<div class="t" style="top:947.75px;font-size:18px;line-height:18px;color:#202124;right:462.60px;text-align:right;">12 289</div>
<div class="t" style="top:947.75px;font-size:18px;line-height:18px;color:#202124;right:185.00px;text-align:right;">168,00</div>
<div class="t" style="top:993.75px;font-size:18px;line-height:18px;color:#3c4043;left:509.71px;">4</div>
<div class="t" style="top:993.75px;font-size:18px;line-height:18px;color:#202124;-webkit-text-stroke:0.45px #202124;letter-spacing:-0.190px;left:550.20px;">Paid Search</div>
<div class="t" style="top:993.75px;font-size:18px;line-height:18px;color:#202124;right:1507.70px;text-align:right;">163</div>
<div class="t" style="top:993.75px;font-size:18px;line-height:18px;color:#202124;right:1307.80px;text-align:right;">154</div>
<div class="t" style="top:993.75px;font-size:18px;line-height:18px;color:#202124;right:1124.00px;text-align:right;">75,12%</div>
<div class="t" style="top:993.75px;font-size:18px;line-height:18px;color:#202124;right:924.50px;text-align:right;">0,90</div>
<div class="t" style="top:993.75px;font-size:18px;line-height:18px;color:#202124;right:740.40px;text-align:right;">2 min 01 s</div>
<div class="t" style="top:993.75px;font-size:18px;line-height:18px;color:#202124;right:462.60px;text-align:right;">2 731</div>
<div class="t" style="top:993.75px;font-size:18px;line-height:18px;color:#202124;right:185.00px;text-align:right;">10,00</div>
<div class="t" style="top:1039.75px;font-size:18px;line-height:18px;color:#3c4043;left:509.71px;">5</div>
<div class="t" style="top:1039.75px;font-size:18px;line-height:18px;color:#202124;-webkit-text-stroke:0.45px #202124;letter-spacing:-0.113px;left:550.20px;">Referral</div>
<div class="t" style="top:1039.75px;font-size:18px;line-height:18px;color:#202124;right:1507.70px;text-align:right;">43</div>
<div class="t" style="top:1039.75px;font-size:18px;line-height:18px;color:#202124;right:1307.80px;text-align:right;">31</div>
<div class="t" style="top:1039.75px;font-size:18px;line-height:18px;color:#202124;right:1124.00px;text-align:right;">52,54%</div>
<div class="t" style="top:1039.75px;font-size:18px;line-height:18px;color:#202124;right:924.50px;text-align:right;">0,62</div>
<div class="t" style="top:1039.75px;font-size:18px;line-height:18px;color:#202124;right:740.40px;text-align:right;">1 min 01 s</div>
<div class="t" style="top:1039.75px;font-size:18px;line-height:18px;color:#202124;right:462.60px;text-align:right;">521</div>
<div class="t" style="top:1039.75px;font-size:18px;line-height:18px;color:#202124;right:185.00px;text-align:right;">0,00</div>
<div class="t" style="top:1085.75px;font-size:18px;line-height:18px;color:#3c4043;left:509.71px;">6</div>
<div class="t" style="top:1085.75px;font-size:18px;line-height:18px;color:#202124;-webkit-text-stroke:0.45px #202124;letter-spacing:-0.073px;left:550.20px;">Display</div>
<div class="t" style="top:1085.75px;font-size:18px;line-height:18px;color:#202124;right:1507.70px;text-align:right;">15</div>
<div class="t" style="top:1085.75px;font-size:18px;line-height:18px;color:#202124;right:1307.80px;text-align:right;">9</div>
<div class="t" style="top:1085.75px;font-size:18px;line-height:18px;color:#202124;right:1124.00px;text-align:right;">42,86%</div>
<div class="t" style="top:1085.75px;font-size:18px;line-height:18px;color:#202124;right:924.50px;text-align:right;">0,60</div>
<div class="t" style="top:1085.75px;font-size:18px;line-height:18px;color:#202124;right:740.40px;text-align:right;">0 min 22 s</div>
<div class="t" style="top:1085.75px;font-size:18px;line-height:18px;color:#202124;right:462.60px;text-align:right;">141</div>
<div class="t" style="top:1085.75px;font-size:18px;line-height:18px;color:#202124;right:185.00px;text-align:right;">0,00</div>
<div class="t" style="top:1131.75px;font-size:18px;line-height:18px;color:#3c4043;left:509.71px;">7</div>
<div class="t" style="top:1131.75px;font-size:18px;line-height:18px;color:#202124;-webkit-text-stroke:0.45px #202124;letter-spacing:-0.068px;left:550.20px;">Organic Social</div>
<div class="t" style="top:1131.75px;font-size:18px;line-height:18px;color:#202124;right:1507.70px;text-align:right;">14</div>
<div class="t" style="top:1131.75px;font-size:18px;line-height:18px;color:#202124;right:1307.80px;text-align:right;">15</div>
<div class="t" style="top:1131.75px;font-size:18px;line-height:18px;color:#202124;right:1124.00px;text-align:right;">71,43%</div>
<div class="t" style="top:1131.75px;font-size:18px;line-height:18px;color:#202124;right:924.50px;text-align:right;">1,07</div>
<div class="t" style="top:1131.75px;font-size:18px;line-height:18px;color:#202124;right:740.40px;text-align:right;">2 min 09 s</div>
<div class="t" style="top:1131.75px;font-size:18px;line-height:18px;color:#202124;right:462.60px;text-align:right;">374</div>
<div class="t" style="top:1131.75px;font-size:18px;line-height:18px;color:#202124;right:185.00px;text-align:right;">14,00</div>
<div class="t" style="top:1177.75px;font-size:18px;line-height:18px;color:#3c4043;left:509.71px;">8</div>
<div class="t" style="top:1177.75px;font-size:18px;line-height:18px;color:#202124;-webkit-text-stroke:0.45px #202124;letter-spacing:-0.074px;left:550.20px;">Paid Shopping</div>
<div class="t" style="top:1177.75px;font-size:18px;line-height:18px;color:#202124;right:1507.70px;text-align:right;">10</div>
<div class="t" style="top:1177.75px;font-size:18px;line-height:18px;color:#202124;right:1307.80px;text-align:right;">7</div>
<div class="t" style="top:1177.75px;font-size:18px;line-height:18px;color:#202124;right:1124.00px;text-align:right;">41,18%</div>
<div class="t" style="top:1177.75px;font-size:18px;line-height:18px;color:#202124;right:924.50px;text-align:right;">0,70</div>
<div class="t" style="top:1177.75px;font-size:18px;line-height:18px;color:#202124;right:740.40px;text-align:right;">0 min 34 s</div>
<div class="t" style="top:1177.75px;font-size:18px;line-height:18px;color:#202124;right:462.60px;text-align:right;">100</div>
<div class="t" style="top:1177.75px;font-size:18px;line-height:18px;color:#202124;right:185.00px;text-align:right;">1,00</div>
<div class="a" style="left:2495px;top:1112px;width:50px;height:50px;border-radius:50%;background:#fff;box-shadow:0 1px 3px rgba(60,64,67,.3),0 4px 8px 3px rgba(60,64,67,.15)"></div>
<svg class="a" style="left:2506px;top:1123px" width="28" height="28" viewBox="0 0 28 28"><path d="M3 3 H25 V20.5 H7.5 L3 25 Z" fill="none" stroke="#3c4043" stroke-width="2.3" stroke-linejoin="round"/><path d="M14 6.5 V12.5" stroke="#3c4043" stroke-width="2.3"/><circle cx="14" cy="16" r="1.25" fill="#3c4043"/></svg>
<div class="a" style="left:2553px;top:91px;width:8px;height:1013px;border-radius:4px;background:#dadce0"></div>
</body></html>
